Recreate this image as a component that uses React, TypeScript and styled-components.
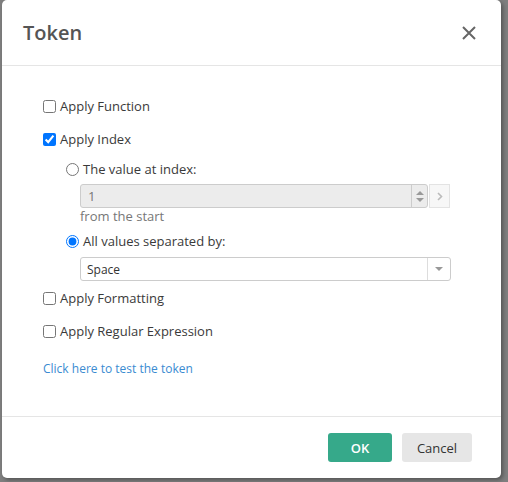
import React from 'react';
import styled, { createGlobalStyle } from 'styled-components';

const Global = createGlobalStyle`
  html, body {
    margin: 0;
    padding: 0;
    background: #7f7f7f;
    font-family: 'Open Sans', 'Liberation Sans', sans-serif;
    overflow: hidden;
  }
`;

const Page = styled.div`
  width: 508px;
  height: 482px;
  padding-left: 2px;
  box-sizing: border-box;
`;

const Dialog = styled.div`
  width: 499px;
  height: 478px;
  background: #fff;
  border-radius: 5px;
  box-shadow: 2px 2px 4px rgba(0, 0, 0, 0.35);
  display: flex;
  flex-direction: column;
`;

const Header = styled.div`
  height: 65px;
  border-bottom: 1px solid #e5e5e5;
  display: flex;
  align-items: center;
  justify-content: space-between;
  padding: 0 24px 0 21px;
`;

const Title = styled.h2`
  margin: 0;
  font-size: 20px;
  font-weight: 600;
  color: #555;
  padding-bottom: 1px;
`;

const Close = styled.button`
  border: 0;
  background: none;
  padding: 0;
  width: 16px;
  height: 16px;
  display: flex;
  cursor: pointer;
`;

const Body = styled.div`
  flex: 1;
  padding: 30px 0 0 38px;
  display: flex;
  flex-direction: column;
`;

const Row = styled.label<{ $top?: number }>`
  display: flex;
  align-items: center;
  height: 20px;
  margin-top: ${(p) => p.$top ?? 0}px;
  font-size: 13px;
  color: #3a3a3a;

  input {
    width: 13px;
    height: 13px;
    margin: 0 4px 0 3px;
    accent-color: #0075ff;
  }
`;

const Group = styled.div`
  margin-left: 23px;
  display: flex;
  flex-direction: column;
`;

const FieldLine = styled.div<{ $top: number }>`
  display: flex;
  margin-top: ${(p) => p.$top}px;
  margin-left: 17px;
  height: 24px;
`;

const NumberBox = styled.div`
  width: 348px;
  box-sizing: border-box;
  border: 1px solid #ccc;
  border-radius: 3px;
  background: #ececec;
  display: flex;
  align-items: center;
  font-size: 13px;
  color: #777;
`;

const NumberText = styled.span`
  flex: 1;
  padding-left: 7px;
`;

const Spinner = styled.div`
  width: 15px;
  height: 100%;
  border-left: 1px solid #ccc;
  display: flex;
  flex-direction: column;
  align-items: center;
  justify-content: center;
  gap: 3px;
`;

const Tri = styled.span<{ $down?: boolean }>`
  width: 0;
  height: 0;
  border-left: 4px solid transparent;
  border-right: 4px solid transparent;
  ${(p) =>
    p.$down ? 'border-top: 4px solid #999;' : 'border-bottom: 4px solid #999;'}
`;

const NextBtn = styled.div`
  width: 21px;
  margin-left: 1px;
  box-sizing: border-box;
  border: 1px solid #e3e3e3;
  background: #f7f7f7;
  display: flex;
  align-items: center;
  justify-content: center;
`;

const Hint = styled.div`
  margin-left: 17px;
  height: 16px;
  line-height: 16px;
  font-size: 13px;
  color: #777;
`;

const Select = styled.div`
  width: 371px;
  box-sizing: border-box;
  border: 1px solid #ccc;
  border-radius: 3px;
  background: #fff;
  display: flex;
  align-items: center;
  font-size: 12px;
  color: #333;
`;

const SelectText = styled.span`
  flex: 1;
  padding-left: 6px;
`;

const SelectArrow = styled.div`
  width: 22px;
  height: 100%;
  border-left: 1px solid #ddd;
  display: flex;
  align-items: center;
  justify-content: center;
`;

const Link = styled.a`
  margin: 20px 0 0 3px;
  height: 16px;
  line-height: 16px;
  font-size: 12px;
  color: #3a8bd1;
  text-decoration: none;
`;

const Footer = styled.div`
  height: 62px;
  border-top: 1px solid #e5e5e5;
  display: flex;
  align-items: flex-start;
  justify-content: flex-end;
  gap: 10px;
  padding: 16px 29px 0 0;
  box-sizing: border-box;
`;

const Button = styled.button<{ $primary?: boolean }>`
  height: 29px;
  width: ${(p) => (p.$primary ? 64 : 70)}px;
  border: 0;
  border-radius: 3px;
  font-family: inherit;
  font-size: 13px;
  font-weight: ${(p) => (p.$primary ? 600 : 400)};
  background: ${(p) => (p.$primary ? '#36a98a' : '#e6e6e6')};
  color: ${(p) => (p.$primary ? '#fff' : '#333')};
  cursor: pointer;
`;

export default function App() {
  return (
    <Page>
      <Global />
      <Dialog>
        <Header>
          <Title>Token</Title>
          <Close aria-label="close">
            <svg width="16" height="16" viewBox="0 0 16 16">
              <path d="M2 2 L14 14 M14 2 L2 14" stroke="#666" strokeWidth="2" />
            </svg>
          </Close>
        </Header>
        <Body>
          <Row>
            <input type="checkbox" />
            Apply Function
          </Row>
          <Row $top={13}>
            <input type="checkbox" defaultChecked />
            Apply Index
          </Row>
          <Group>
            <Row $top={10}>
              <input type="radio" name="idx" />
              The value at index:
            </Row>
            <FieldLine $top={5}>
              <NumberBox>
                <NumberText>1</NumberText>
                <Spinner>
                  <Tri />
                  <Tri $down />
                </Spinner>
              </NumberBox>
              <NextBtn>
                <svg width="6" height="9" viewBox="0 0 6 9">
                  <path d="M1 1 L4.5 4.5 L1 8" stroke="#bbb" strokeWidth="1.6" fill="none" />
                </svg>
              </NextBtn>
            </FieldLine>
            <Hint>from the start</Hint>
            <Row $top={7}>
              <input type="radio" name="idx" defaultChecked />
              All values separated by:
            </Row>
            <FieldLine $top={6}>
              <Select>
                <SelectText>Space</SelectText>
                <SelectArrow>
                  <Tri $down />
                </SelectArrow>
              </Select>
            </FieldLine>
          </Group>
          <Row $top={7}>
            <input type="checkbox" />
            Apply Formatting
          </Row>
          <Row $top={13}>
            <input type="checkbox" />
            Apply Regular Expression
          </Row>
          <Link href="#">Click here to test the token</Link>
        </Body>
        <Footer>
          <Button $primary>OK</Button>
          <Button>Cancel</Button>
        </Footer>
      </Dialog>
    </Page>
  );
}
